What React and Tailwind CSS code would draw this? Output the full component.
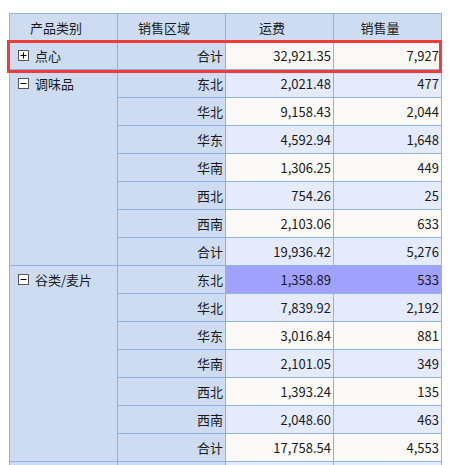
import React from "react";

const groups = [
  {
    name: "点心",
    open: false,
    rows: [["合计", "32,921.35", "7,927"]],
  },
  {
    name: "调味品",
    open: true,
    rows: [
      ["东北", "2,021.48", "477"],
      ["华北", "9,158.43", "2,044"],
      ["华东", "4,592.94", "1,648"],
      ["华南", "1,306.25", "449"],
      ["西北", "754.26", "25"],
      ["西南", "2,103.06", "633"],
      ["合计", "19,936.42", "5,276"],
    ],
  },
  {
    name: "谷类/麦片",
    open: true,
    rows: [
      ["东北", "1,358.89", "533"],
      ["华北", "7,839.92", "2,192"],
      ["华东", "3,016.84", "881"],
      ["华南", "2,101.05", "349"],
      ["西北", "1,393.24", "135"],
      ["西南", "2,048.60", "463"],
      ["合计", "17,758.54", "4,553"],
    ],
  },
  // next group starts below the fold; only its top edge shows
  {
    name: "",
    open: true,
    rows: [["", "", ""]],
  },
];

function ToggleIcon({ open }) {
  return (
    <svg width="11" height="11" viewBox="0 0 11 11" className="inline-block shrink-0">
      <rect x="0.5" y="0.5" width="10" height="10" fill="#fff" stroke="#555" />
      <line x1="2.5" y1="5.5" x2="8.5" y2="5.5" stroke="#000" />
      {!open && <line x1="5.5" y1="2.5" x2="5.5" y2="8.5" stroke="#000" />}
    </svg>
  );
}

export default function App() {
  let rowIndex = 0;

  return (
    <div
      className="relative h-[465px] w-[456px] overflow-hidden bg-white text-[13px] text-[#1a1a1a]"
      style={{ fontFamily: '"Noto Sans CJK SC", "Noto Sans", sans-serif' }}
    >
      <div className="pl-[9px] pt-[13px]">
        <table className="w-[433px] table-fixed border-collapse">
          <colgroup>
            <col className="w-[108px]" />
            <col className="w-[108px]" />
            <col className="w-[108px]" />
            <col className="w-[108px]" />
          </colgroup>
          <thead>
            <tr className="h-[28px] bg-[#cddcf0]">
              {["产品类别", "销售区域", "运费", "销售量"].map((h) => (
                <th
                  key={h}
                  className="border border-[#8fb3e0] p-0 pr-[15px] text-center font-normal leading-none"
                >
                  {h}
                </th>
              ))}
            </tr>
          </thead>
          <tbody>
            {groups.map((g, gi) =>
              g.rows.map((r, i) => {
                const shade = rowIndex++ % 2 === 0 ? "bg-[#faf9f5]" : "bg-[#e5ebfd]";
                const hot = g.name === "谷类/麦片" && i === 0;
                const cellBg = hot ? "bg-[#a1a1ff]" : shade;
                return (
                  <tr key={gi + "-" + i} className="h-[28px]">
                    {i === 0 && (
                      <td
                        rowSpan={g.rows.length}
                        className="border border-[#8fb3e0] bg-[#cddcf0] px-[8px] pt-[5px] align-top leading-none"
                      >
                        {g.name && (
                          <div className="flex h-[17px] items-center gap-[6px]">
                            <ToggleIcon open={g.open} />
                            <span>{g.name}</span>
                          </div>
                        )}
                      </td>
                    )}
                    <td className="border border-[#8fb3e0] bg-[#cddcf0] pr-[2px] text-right leading-none">
                      {r[0]}
                    </td>
                    <td className={`border border-[#8fb3e0] ${cellBg} pr-[2px] text-right leading-none`}>
                      {r[1]}
                    </td>
                    <td className={`border border-[#8fb3e0] ${cellBg} pr-[2px] text-right leading-none`}>
                      {r[2]}
                    </td>
                  </tr>
                );
              })
            )}
          </tbody>
        </table>
      </div>

      {/* selection outline around the first group */}
      <div className="absolute left-[7px] top-[40px] h-[33px] w-[435px] border-[3px] border-[#f23a3a]" />
    </div>
  );
}
